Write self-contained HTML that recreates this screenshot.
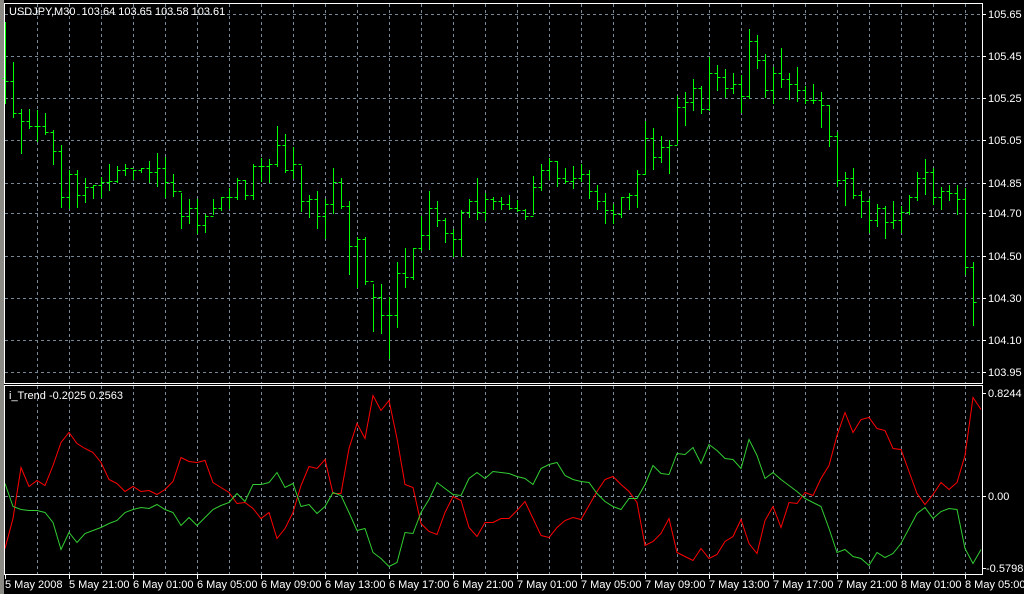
<!DOCTYPE html>
<html><head><meta charset="utf-8"><style>
html,body{margin:0;padding:0;background:#000;width:1024px;height:594px;overflow:hidden}
svg{display:block}
text{font-family:"Liberation Sans","DejaVu Sans",sans-serif;font-size:11px;fill:#fff;white-space:pre}
</style></head><body>
<svg id="s" width="1024" height="594" xmlns="http://www.w3.org/2000/svg" shape-rendering="crispEdges">
<rect x="0" y="0" width="1024" height="594" fill="#000"/>
<rect x="0" y="0" width="4" height="594" fill="#8c8a84"/>
<g id="grid" stroke="#778899" stroke-width="1" stroke-dasharray="3,3"></g>
<g id="bars" stroke="#00ff00" stroke-width="1"></g>
<g id="ind" fill="none" stroke-width="1" shape-rendering="auto"></g>
<g stroke="#fff" stroke-width="1" fill="none">
<path d="M4.5 3.5 H982.5 V383.5 H4.5 Z"/>
<path d="M4.5 385.5 H982.5 V574.5 H4.5 Z"/>
</g>
<g id="axis"></g>
<text x="9" y="15" xml:space="preserve">USDJPY,M30  103.64 103.65 103.58 103.61</text>
<text x="9" y="399">i_Trend -0.2025 0.2563</text>
</svg>
<script>
var NS="http://www.w3.org/2000/svg";
function el(p,t,a,txt){var e=document.createElementNS(NS,t);for(var k in a)e.setAttribute(k,a[k]);if(txt)e.textContent=txt;p.appendChild(e);return e;}
var g=document.getElementById('grid');
for(var x=37;x<=965;x+=32){el(g,'line',{x1:x+.5,y1:4,x2:x+.5,y2:383});el(g,'line',{x1:x+.5,y1:386,x2:x+.5,y2:574});}
var hy=[14,56,98,140,183,213,256,298,340,372];
var hl=["105.65","105.45","105.25","105.05","104.85","104.70","104.50","104.30","104.10","103.95"];
hy.forEach(function(y){el(g,'line',{x1:5,y1:y+.5,x2:982,y2:y+.5});});
el(g,'line',{x1:5,y1:496.5,x2:982,y2:496.5});
var ax=document.getElementById('axis');
hy.forEach(function(y,i){el(ax,'line',{x1:983,y1:y+.5,x2:986,y2:y+.5,stroke:'#fff'});el(ax,'text',{x:988,y:y+4},hl[i]);});
[[393,"0.8244",988],[496,"0.00",988],[568,"-0.5798",986]].forEach(function(a){el(ax,'line',{x1:983,y1:a[0]+.5,x2:986,y2:a[0]+.5,stroke:'#fff'});el(ax,'text',{x:a[2],y:a[0]+4},a[1]);});
var tl=["5 May 2008","5 May 21:00","6 May 01:00","6 May 05:00","6 May 09:00","6 May 13:00","6 May 17:00","6 May 21:00","7 May 01:00","7 May 05:00","7 May 09:00","7 May 13:00","7 May 17:00","7 May 21:00","8 May 01:00","8 May 05:00"];
tl.forEach(function(t,i){var x=i==0?5:5+64*i;el(ax,'line',{x1:x+.5,y1:575,x2:x+.5,y2:579,stroke:'#fff'});el(ax,'text',{x:x,y:588},t);});
var B=[[22,103,81],[62,117,113],[109,153,121],[109,128,126],[110,141,126],[113,134,132],[130,164,151],[145,207,197],[170,208,174],[170,207,195],[178,202,187],[185,198,185],[177,197,182],[164,190,181],[166,182,170],[164,175,168],[170,179,170],[168,172,168],[161,182,172],[153,186,168],[157,197,182],[174,196,191],[193,228,216],[199,223,208],[199,233,225],[214,232,216],[199,214,208],[197,210,197],[188,208,197],[178,199,180],[180,199,195],
[164,199,166],[158,181,166],[159,182,164],[126,166,145],[134,172,170],[147,178,164],[166,211,201],[195,217,199],[191,228,216],[199,238,204],[168,213,182],[178,208,206],[201,274,246],[237,287,239],[237,284,281],[284,331,297],[284,333,315],[297,358,315],[262,327,273],[248,287,277],[248,279,248],[216,250,235],[191,249,208],[201,226,220],[218,242,233],[229,256,239],[210,256,212],[199,217,201],[178,219,212],[193,220,199],
[197,209,201],[197,209,204],[195,209,208],[200,211,210],[209,219,216],[176,214,187],[164,190,170],[158,179,161],[161,186,178],[168,183,181],[166,188,178],[164,181,174],[170,198,191],[185,209,201],[193,223,210],[204,223,214],[197,217,197],[193,209,195],[170,207,174],[121,174,138],[128,169,157],[136,162,147],[140,173,145],[96,143,107],[92,125,102],[79,110,88],[86,113,109],[57,110,73],[65,90,77],[69,97,88],
[73,93,84],[75,112,96],[29,98,41],[35,68,60],[54,97,90],[67,103,73],[48,87,79],[73,99,84],[67,101,90],[86,103,100],[84,103,100],[92,127,105],[105,146,136],[132,186,180],[172,205,178],[168,198,195],[191,217,201],[199,232,220],[204,226,208],[206,238,222],[201,228,220],[206,232,212],[195,214,197],[172,200,178],[159,194,172],[168,204,197],[187,209,191],[185,200,193],[185,214,199],[188,274,267],[262,325,302]];
var bg=document.getElementById('bars');var prev=78,d="";
B.forEach(function(b,i){var x=5+8*i+.5;d+="M"+x+" "+b[0]+"V"+(b[1]+1)+"M"+(x-3)+" "+(prev+.5)+"H"+x+"M"+x+" "+(b[2]+.5)+"H"+(x+3);prev=b[2];});
el(bg,'path',{d:d});
var R=[548,518,467,486,480,485,465,442,432,443,448,452,462,479,483,491,486,491,490,494,489,481,457,461,462,460,482,487,492,503,502,508,518,512,538,528,512,485,466,468,459,493,493,448,423,438,395,410,400,438,484,487,523,531,534,512,496,500,527,536,522,522,518,518,510,501,518,535,537,527,520,517,519,505,491,479,476,484,491,502,545,541,533,518,552,556,560,548,558,554,541,536,519,543,553,520,506,527,502,503,492,495,478,465,435,412,432,419,417,428,430,448,449,471,493,504,494,482,489,482,455,397,409];
var G=[483,506,509,510,510,512,522,549,532,542,533,530,527,523,520,512,509,507,508,504,509,512,525,517,525,517,509,505,502,493,501,484,484,482,472,487,483,506,504,513,506,492,495,512,530,528,552,558,566,562,532,533,512,499,482,488,494,495,478,472,478,471,472,473,476,478,484,468,464,462,475,479,481,482,493,501,506,509,498,498,484,465,473,474,453,454,447,463,444,450,458,459,468,439,455,478,472,479,485,491,498,502,506,528,552,549,556,558,565,552,557,553,543,528,513,507,518,511,508,509,548,563,549];
var ig=document.getElementById('ind');
function pl(a,c){var p=a.map(function(y,i){return (5+8*i)+","+(y+.5)}).join(" ");el(ig,'polyline',{points:p,stroke:c});}
var cp=el(el(document.getElementById('s'),'defs',{}),'clipPath',{id:'c'});
el(cp,'rect',{x:5,y:386,width:977,height:188});
ig.setAttribute('clip-path','url(#c)');
pl(R,'#ff0000');pl(G,'#32cd32');
</script>
</body></html>
